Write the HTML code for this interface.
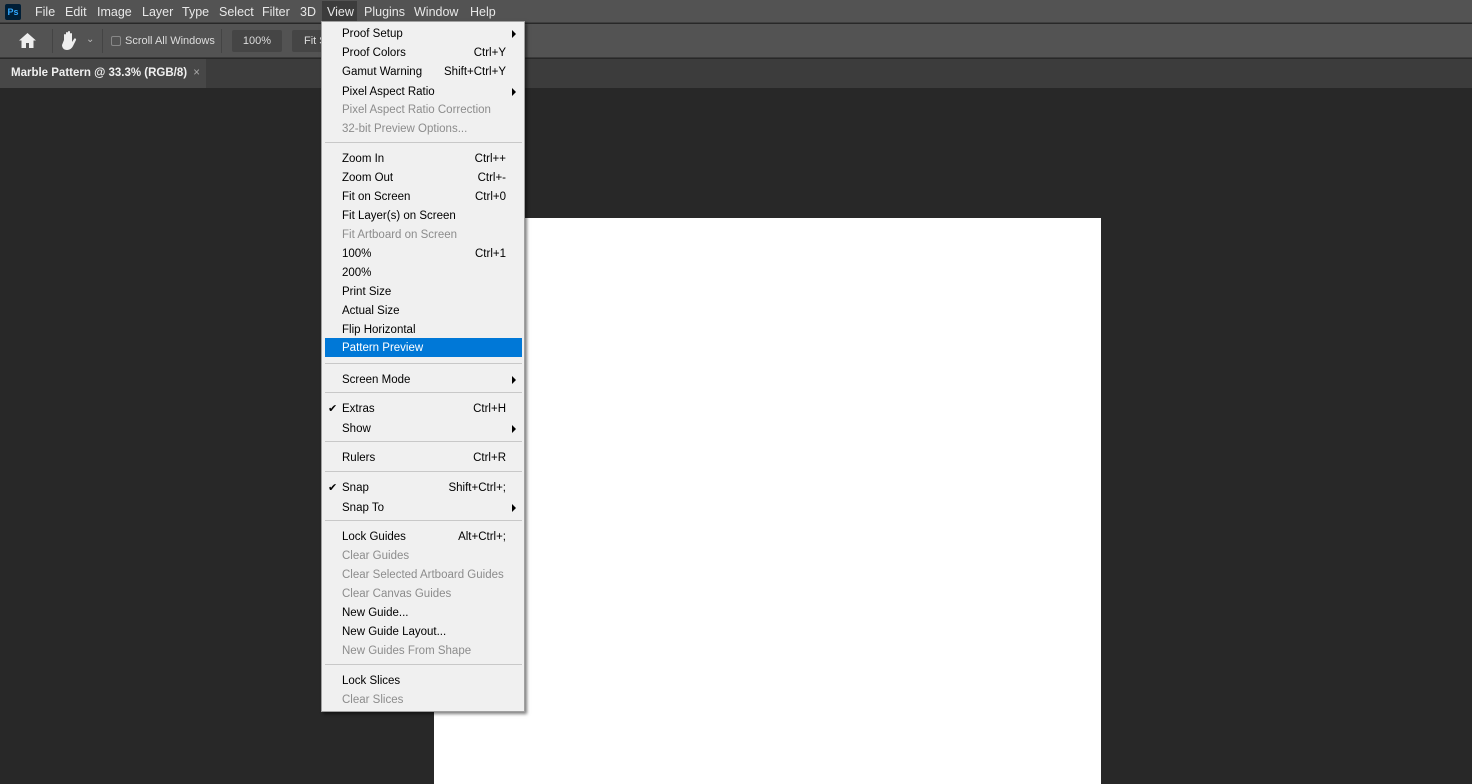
<!DOCTYPE html>
<html><head><meta charset="utf-8"><style>
*{margin:0;padding:0;box-sizing:border-box}
body{width:1472px;height:784px;overflow:hidden;background:#282828;font-family:"Liberation Sans",sans-serif;position:relative}
.abs{position:absolute}
#mb{left:0;top:0;width:1472px;height:23px;background:#535353;border-bottom:1px solid #3e3e3e}
#mb span{position:absolute;top:5px;font-size:12.5px;color:#e8e8e8}
#tb{left:0;top:24px;width:1472px;height:34px;background:#535353;border-bottom:1px solid #3a3a3a}
#tabs{left:0;top:59px;width:1472px;height:29px;background:#3c3c3c}
#tab{left:0;top:59px;width:206px;height:29px;background:#474747;color:#f0f0f0;font-size:11.5px;font-weight:bold;padding:8px 0 0 11px;white-space:nowrap}
#doc{left:434px;top:218px;width:667px;height:566px;background:#fff}
#menu{left:321px;top:21px;width:204px;height:691px;background:#f0f0f0;border:1px solid #a0a0a0;box-shadow:2px 2px 3px rgba(0,0,0,.5)}
.it{position:absolute;left:3px;width:197px;height:19px;font-size:11.5px;color:#000;line-height:19px;white-space:nowrap}
.it .l{position:absolute;left:17px;top:1px}
.it .r{position:absolute;right:16px;top:1px}
.it.d{color:#8c8c8c}
.it.h{background:#0078d7;color:#fff}
.ar{position:absolute;right:6px;top:6px;width:0;height:0;border-top:4px solid transparent;border-bottom:4px solid transparent;border-left:4px solid #000}
.ck{position:absolute;left:3px;top:1px;font-size:11px}
.sep{position:absolute;left:3px;width:197px;height:1px;background:#c8c8c8}
</style></head><body>
<div id="mb" class="abs">
<div class="abs" style="left:5px;top:4px;width:16px;height:16px;background:#001e36;border-radius:2px;color:#31a8ff;font-size:9px;font-weight:bold;text-align:center;line-height:16px">Ps</div>
<span style="left:35px">File</span><span style="left:65px">Edit</span><span style="left:97px">Image</span><span style="left:142px">Layer</span><span style="left:182px">Type</span><span style="left:219px">Select</span><span style="left:262px">Filter</span><span style="left:300px">3D</span>
<div class="abs" style="left:322px;top:1px;width:35px;height:22px;background:#3c3c3c"></div>
<span style="left:327px">View</span><span style="left:364px">Plugins</span><span style="left:414px">Window</span><span style="left:470px">Help</span>
</div>
<div id="tb" class="abs">
<svg class="abs" style="left:19px;top:9px" width="17" height="15" viewBox="0 0 17 15"><path d="M8.5 0L0 7.5h2.5V15h4.5v-5h3v5h4.5V7.5H17z" fill="#eee"/></svg>
<div class="abs" style="left:52px;top:5px;width:1px;height:24px;background:#444"></div>
<svg class="abs" style="left:61px;top:7px" width="17" height="19" viewBox="0 0 17 19"><path d="M3 9V4a1 1 0 012 0v5V2a1 1 0 012 0v7V1a1 1 0 012 0v8V3a1 1 0 012 0v8l2-3a1 1 0 012 1l-3 6c-1 2-3 4-6 4s-5-2-5-5z" fill="#eee"/></svg>
<div class="abs" style="left:86px;top:10px;color:#bbb;font-size:10px">&#8964;</div>
<div class="abs" style="left:102px;top:5px;width:1px;height:24px;background:#444"></div>
<div class="abs" style="left:111px;top:12px;width:10px;height:10px;border:1px solid #888;border-radius:2px"></div>
<div class="abs" style="left:125px;top:11px;color:#ddd;font-size:11px">Scroll All Windows</div>
<div class="abs" style="left:221px;top:5px;width:1px;height:24px;background:#444"></div>
<div class="abs" style="left:232px;top:6px;width:50px;height:22px;background:#454545;border-radius:2px;color:#ddd;font-size:11px;text-align:center;line-height:22px">100%</div>
<div class="abs" style="left:292px;top:6px;width:40px;height:22px;background:#454545;border-radius:2px;color:#ddd;font-size:11px;line-height:22px;padding-left:12px">Fit S</div>
</div>
<div id="tabs" class="abs"></div>
<div id="tab" class="abs">Marble Pattern @ 33.3% (RGB/8) <span style="color:#aaa;font-weight:normal;margin-left:3px">×</span></div>
<div id="doc" class="abs"></div>
<div id="menu" class="abs">
<div class="it" style="top:2px"><span class="l">Proof Setup</span><i class="ar"></i></div>
<div class="it" style="top:21px"><span class="l">Proof Colors</span><span class="r">Ctrl+Y</span></div>
<div class="it" style="top:40px"><span class="l">Gamut Warning</span><span class="r">Shift+Ctrl+Y</span></div>
<div class="it" style="top:60px"><span class="l">Pixel Aspect Ratio</span><i class="ar"></i></div>
<div class="it d" style="top:78px"><span class="l">Pixel Aspect Ratio Correction</span></div>
<div class="it d" style="top:97px"><span class="l">32-bit Preview Options...</span></div>
<div class="sep" style="top:120px"></div>
<div class="it" style="top:127px"><span class="l">Zoom In</span><span class="r">Ctrl++</span></div>
<div class="it" style="top:146px"><span class="l">Zoom Out</span><span class="r">Ctrl+-</span></div>
<div class="it" style="top:165px"><span class="l">Fit on Screen</span><span class="r">Ctrl+0</span></div>
<div class="it" style="top:184px"><span class="l">Fit Layer(s) on Screen</span></div>
<div class="it d" style="top:203px"><span class="l">Fit Artboard on Screen</span></div>
<div class="it" style="top:222px"><span class="l">100%</span><span class="r">Ctrl+1</span></div>
<div class="it" style="top:241px"><span class="l">200%</span></div>
<div class="it" style="top:260px"><span class="l">Print Size</span></div>
<div class="it" style="top:279px"><span class="l">Actual Size</span></div>
<div class="it" style="top:298px"><span class="l">Flip Horizontal</span></div>
<div class="it h" style="top:316px"><span class="l">Pattern Preview</span></div>
<div class="sep" style="top:341px"></div>
<div class="it" style="top:348px"><span class="l">Screen Mode</span><i class="ar"></i></div>
<div class="sep" style="top:370px"></div>
<div class="it" style="top:377px"><span class="ck">✔</span><span class="l">Extras</span><span class="r">Ctrl+H</span></div>
<div class="it" style="top:397px"><span class="l">Show</span><i class="ar"></i></div>
<div class="sep" style="top:419px"></div>
<div class="it" style="top:426px"><span class="l">Rulers</span><span class="r">Ctrl+R</span></div>
<div class="sep" style="top:449px"></div>
<div class="it" style="top:456px"><span class="ck">✔</span><span class="l">Snap</span><span class="r">Shift+Ctrl+;</span></div>
<div class="it" style="top:476px"><span class="l">Snap To</span><i class="ar"></i></div>
<div class="sep" style="top:498px"></div>
<div class="it" style="top:505px"><span class="l">Lock Guides</span><span class="r">Alt+Ctrl+;</span></div>
<div class="it d" style="top:524px"><span class="l">Clear Guides</span></div>
<div class="it d" style="top:543px"><span class="l">Clear Selected Artboard Guides</span></div>
<div class="it d" style="top:562px"><span class="l">Clear Canvas Guides</span></div>
<div class="it" style="top:581px"><span class="l">New Guide...</span></div>
<div class="it" style="top:600px"><span class="l">New Guide Layout...</span></div>
<div class="it d" style="top:619px"><span class="l">New Guides From Shape</span></div>
<div class="sep" style="top:642px"></div>
<div class="it" style="top:649px"><span class="l">Lock Slices</span></div>
<div class="it d" style="top:668px"><span class="l">Clear Slices</span></div>
</div>
</body></html>
